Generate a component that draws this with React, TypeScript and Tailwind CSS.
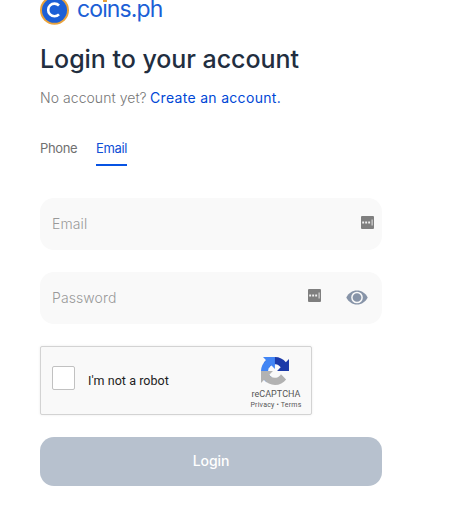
import React from "react";

function PasswordManagerIcon() {
  return (
    <svg width="13" height="13" viewBox="0 0 13 13" className="block shrink-0">
      <rect x="0" y="0" width="13" height="13" rx="1" fill="#7f7f7f" />
      <path d="M1.200 5.500h1.900v1.900h-1.900zM4.200 5.500h1.900v1.900h-1.900zM7.200 5.500h1.900v1.900h-1.900z" fill="#f0f0f0" />
      <path d="M10.600 3.500h1v6h-1z" fill="#e8e8e8" />
    </svg>
  );
}

function EyeIcon() {
  return (
    <svg width="22" height="15" viewBox="0 0 22 15" className="block shrink-0">
      <path d="M0.300 7.500C2.400 3.200 6.300.500 11 .500s8.600 2.700 10.700 7C19.600 11.800 15.700 14.500 11 14.500S2.400 11.800.300 7.500z" fill="#8794a8" />
      <circle cx="11" cy="7.500" r="5.100" fill="none" stroke="#f9f9f9" strokeWidth="1.500" />
    </svg>
  );
}

function RecaptchaLogo() {
  return (
    <svg width="28" height="28" viewBox="0 0 64 64" className="block">
      <path d="M64 31.955l-.033-1.37V4.687l-7.16 7.16C50.948 4.674 42.033.093 32.05.093c-10.4 0-19.622 4.96-25.458 12.64l11.736 11.86a15.55 15.55 0 0 1 4.754-5.334c2.05-1.6 4.952-2.906 8.968-2.906.485 0 .86.057 1.135.163 4.976.393 9.288 3.14 11.828 7.124l-8.307 8.307L64 31.953" fill="#1c3aa9" />
      <path d="M31.862.094l-1.37.033H4.594l7.16 7.16C4.58 13.147 0 22.06 0 32.046c0 10.4 4.96 19.622 12.64 25.458L24.5 45.768a15.55 15.55 0 0 1-5.334-4.754c-1.6-2.05-2.906-4.952-2.906-8.968 0-.485.057-.86.163-1.135.393-4.976 3.14-9.288 7.124-11.828l8.307 8.307L31.86.095" fill="#4285f4" />
      <path d="M.001 32.045l.033 1.37v25.898l7.16-7.16c5.86 7.173 14.774 11.754 24.76 11.754 10.4 0 19.622-4.96 25.458-12.64l-11.736-11.86a15.55 15.55 0 0 1-4.754 5.334c-2.05 1.6-4.952 2.906-8.968 2.906-.485 0-.86-.057-1.135-.163-4.976-.393-9.288-3.14-11.828-7.124l8.307-8.307c-10.522.04-22.4.066-27.295-.005" fill="#b2b2b2" />
    </svg>
  );
}

function Brand() {
  return (
    <div className="flex h-[26px] items-start">
      <svg width="29" height="26" viewBox="0 0 29 26" className="block shrink-0">
        <circle cx="14.500" cy="10.300" r="14.500" fill="#e9a23b" />
        <circle cx="14.500" cy="10.300" r="12.500" fill="#1c5fd6" />
        <path d="M19 5.500A6.300 6.300 0 1 0 19 14.300" fill="none" stroke="#fff" strokeWidth="2.600" />
      </svg>
      <span className="ml-[8px] block text-[23px] leading-[19px] tracking-[-0.900px] whitespace-nowrap text-[#1c5fd6]">
        co
        <span className="relative inline-block">
          i
          <span className="absolute top-0 left-px h-[3px] w-[4px] border-b border-white bg-[#e9a23b]" />
        </span>
        ns.ph
      </span>
    </div>
  );
}

export default function App() {
  return (
    <main className="h-[513px] w-[449px] bg-white pl-10 font-['Inter',sans-serif]">
      <Brand />
      <h1 className="mt-[17px] h-8 text-[25px] leading-8 font-medium tracking-[-0.040px] whitespace-nowrap text-[#222e3f]">
        Login to your account
      </h1>
      <p className="mt-[13px] h-5 text-[14px] leading-5 whitespace-nowrap text-[#777]">
        <span className="inline-block w-[110px] font-light tracking-[0.050px]">No account yet?</span>
        <a className="tracking-[0.310px] text-[#0047d6]">Create an account.</a>
      </p>
      <nav className="mt-[30px] flex h-[28px] gap-[18px] text-[13px] leading-[20px] tracking-[-0.350px]">
        <span className="w-[38px] text-[#707070]">Phone</span>
        <span className="w-[31px] border-b-2 border-[#0753e3] text-[#0f4fd6]">Email</span>
      </nav>
      <div className="mt-8 flex h-[52px] w-[342px] items-center justify-between rounded-[14px] bg-[#f9f9f9] pr-[8px] pl-3">
        <span className="-mt-[2px] text-[14px] font-light tracking-[0.100px] text-[#999]">Email</span>
        <span className="-mt-[3px]"><PasswordManagerIcon /></span>
      </div>
      <div className="mt-[22px] flex h-[52px] w-[342px] items-center rounded-[14px] bg-[#f9f9f9] pr-[14px] pl-3">
        <span className="-mt-[2px] grow text-[14px] font-light tracking-[0.100px] text-[#999]">Password</span>
        <span className="-mt-[5px] mr-[25px]"><PasswordManagerIcon /></span>
        <span className="-mt-[1px]"><EyeIcon /></span>
      </div>
      <div className="mt-[22px] flex h-[69px] w-[272px] rounded-[2px] border border-[#d3d3d3] bg-[#f9f9f9] font-['Roboto',sans-serif] shadow-[0_0_3px_rgba(0,0,0,0.08)]">
        <span className="mt-[19px] ml-[11px] h-[24px] w-[23px] shrink-0 rounded-[2px] border border-[#c1c1c1] bg-white" />
        <span className="mt-[25px] ml-[13px] h-[18px] text-[12.500px] leading-[18px] tracking-[0.050px] whitespace-nowrap text-[#222]">I'm not a robot</span>
        <div className="mt-[10px] mr-[5px] ml-auto flex w-[60px] flex-col items-center whitespace-nowrap text-[#555]">
          <span className="mr-[2px]"><RecaptchaLogo /></span>
          <span className="mt-[3px] text-[9px] leading-[12px] tracking-[0.050px]">reCAPTCHA</span>
          <span className="text-[7px] leading-[10px] tracking-[0.200px]">Privacy • Terms</span>
        </div>
      </div>
      <button className="mt-[22px] flex h-[49px] w-[342px] items-center justify-center rounded-[14px] bg-[#b7c1ce] pb-[2px] text-[14px] font-medium tracking-[-0.100px] text-white">
        Login
      </button>
    </main>
  );
}
